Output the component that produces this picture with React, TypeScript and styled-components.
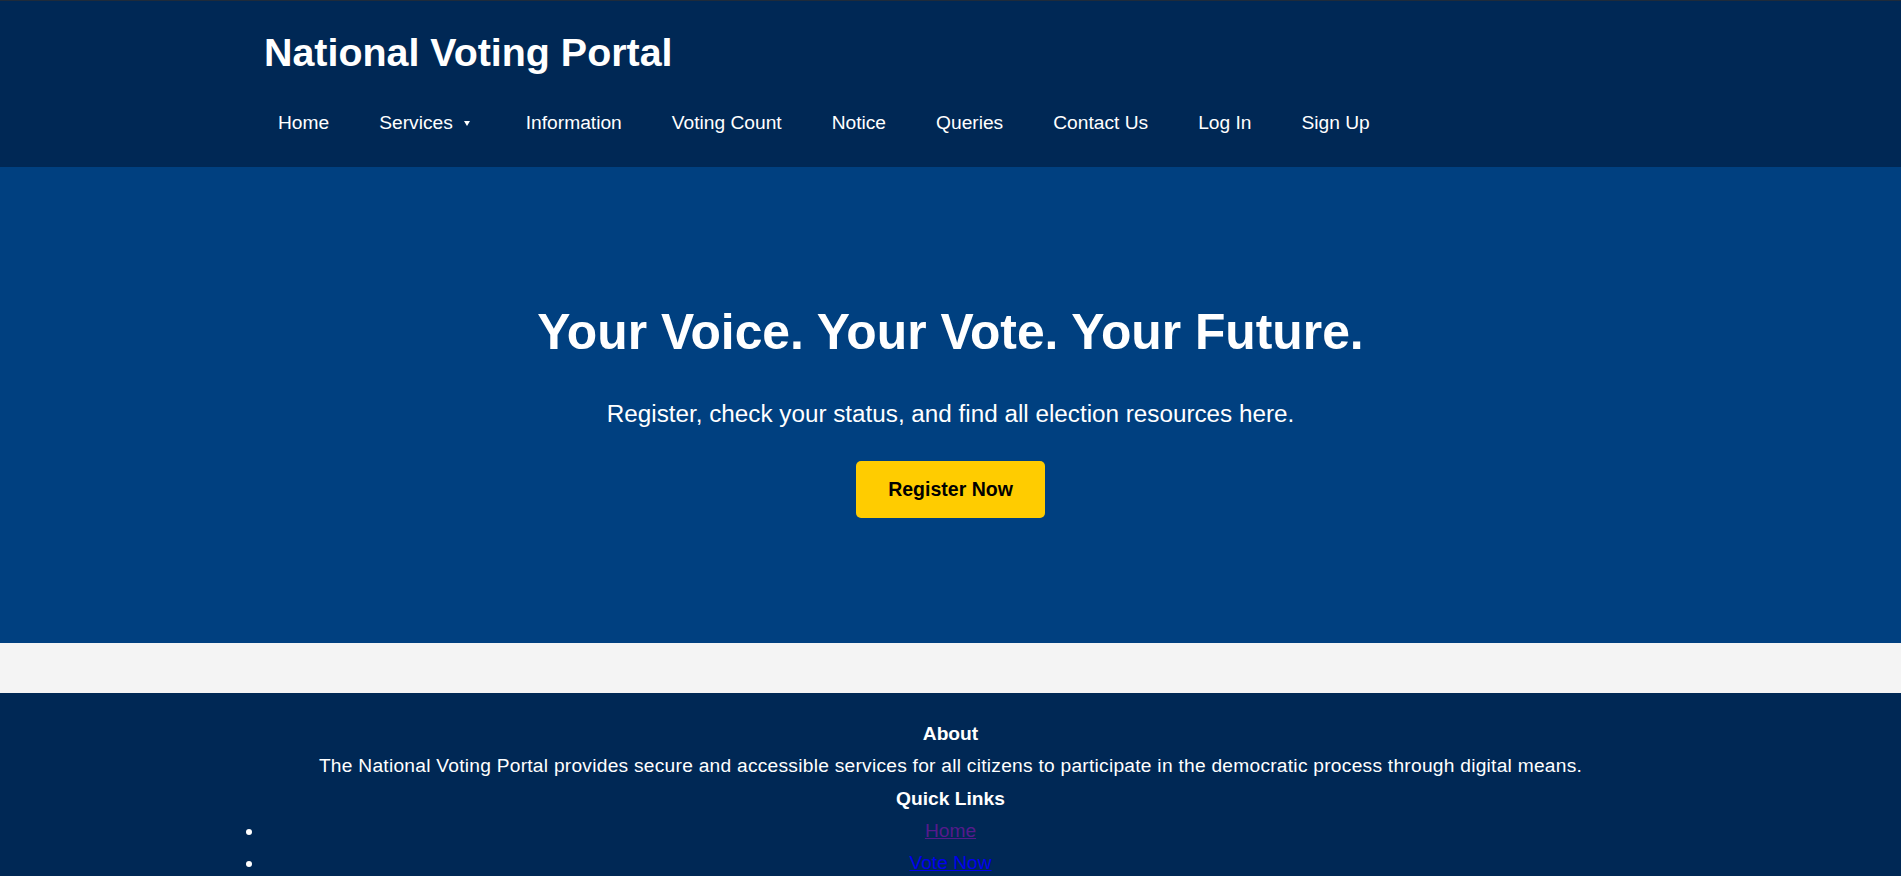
import React from "react";
import styled, { createGlobalStyle } from "styled-components";

const GlobalStyle = createGlobalStyle`
  html, body {
    margin: 0;
    padding: 0;
    background: #ffffff;
    font-family: "Liberation Sans", Arial, sans-serif;
    font-size: 19.2px;
  }
  * { box-sizing: border-box; }
`;

const Header = styled.header`
  background: #002855;
  border-top: 1px solid #1f2b3a;
  color: #ffffff;
  padding: 29px 0 0;
  height: 167px;
`;

const Container = styled.div`
  width: 1373px;
  margin: 0 auto;
`;

const Brand = styled.h1`
  margin: 0;
  font-size: 39.4px;
  line-height: 44px;
  font-weight: 700;
  color: #ffffff;
`;

const NavList = styled.ul`
  list-style: none;
  margin: 0;
  padding: 38px 0 0 14px;
  display: flex;
  gap: 50px;
`;

const NavItem = styled.li`
  display: flex;
  align-items: center;
`;

const NavLink = styled.a`
  color: #ffffff;
  text-decoration: none;
  font-size: 19.2px;
  line-height: 22px;
  display: inline-flex;
  align-items: center;
`;

const Caret = styled.span`
  display: inline-block;
  width: 0;
  height: 0;
  border-left: 3px solid transparent;
  border-right: 3px solid transparent;
  border-top: 5px solid #ffffff;
  margin: 0 6px 0 11px;
`;

const Hero = styled.section`
  background: #004080;
  color: #ffffff;
  text-align: center;
  height: 476px;
  padding-top: 137px;
`;

const Headline = styled.h2`
  margin: 0;
  font-size: 49.8px;
  line-height: 57px;
  font-weight: 700;
`;

const Lead = styled.p`
  margin: 39px 0 0;
  font-size: 24.25px;
  line-height: 28px;
`;

const CTA = styled.a`
  display: inline-flex;
  align-items: center;
  justify-content: center;
  margin-top: 33px;
  height: 57px;
  padding: 0 32.5px;
  background: #ffcc00;
  color: #000000;
  font-weight: 700;
  font-size: 19.5px;
  border-radius: 5px;
  text-decoration: none;
`;

const Main = styled.main`
  background: #f4f4f4;
  height: 50px;
`;

const Footer = styled.footer`
  background: #002855;
  color: #ffffff;
  text-align: center;
  padding: 30px 0 40px;
`;

const FooterTitle = styled.h4`
  margin: 0 0 10.3px;
  font-size: 19.2px;
  line-height: 22px;
  font-weight: 700;
`;

const FooterText = styled.p`
  margin: 0 0 10.3px;
  font-size: 19.2px;
  line-height: 22px;
  letter-spacing: 0.25px;
`;

const LinkList = styled.ul`
  margin: 0;
  padding: 0;
  list-style: disc outside;
`;

const LinkItem = styled.li`
  margin: 0 0 10.3px;
  line-height: 22px;
  font-size: 19.2px;
  color: #ffffff;
`;

const FooterLink = styled.a<{ $visited?: boolean }>`
  color: ${(p) => (p.$visited ? "#551a8b" : "#0000ee")};
  text-decoration: underline;
`;

const navItems = [
  "Home",
  "Services",
  "Information",
  "Voting Count",
  "Notice",
  "Queries",
  "Contact Us",
  "Log In",
  "Sign Up",
];

export default function App() {
  return (
    <>
      <GlobalStyle />
      <Header>
        <Container>
          <Brand>National Voting Portal</Brand>
          <nav>
            <NavList>
              {navItems.map((item) => (
                <NavItem key={item}>
                  <NavLink href="#">
                    {item}
                    {item === "Services" && <Caret />}
                  </NavLink>
                </NavItem>
              ))}
            </NavList>
          </nav>
        </Container>
      </Header>
      <Hero>
        <Headline>Your Voice. Your Vote. Your Future.</Headline>
        <Lead>Register, check your status, and find all election resources here.</Lead>
        <CTA href="#">Register Now</CTA>
      </Hero>
      <Main />
      <Footer>
        <Container>
          <FooterTitle>About</FooterTitle>
          <FooterText>
            The National Voting Portal provides secure and accessible services for all citizens to
            participate in the democratic process through digital means.
          </FooterText>
          <FooterTitle>Quick Links</FooterTitle>
          <LinkList>
            <LinkItem>
              <FooterLink href="#" $visited>
                Home
              </FooterLink>
            </LinkItem>
            <LinkItem>
              <FooterLink href="#">Vote Now</FooterLink>
            </LinkItem>
          </LinkList>
        </Container>
      </Footer>
    </>
  );
}
